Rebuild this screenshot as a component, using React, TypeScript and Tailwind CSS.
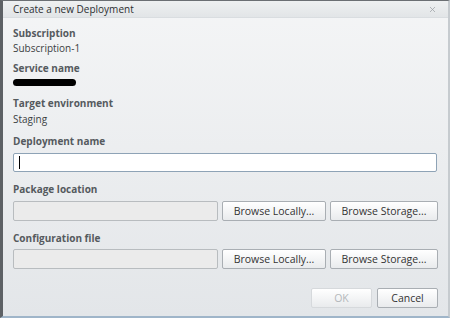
import { X } from 'lucide-react'

function Label({ children }: { children: React.ReactNode }) {
  return <div className="text-[10px] leading-[14px] font-bold text-[#555a5e]">{children}</div>
}

function Btn({ children, disabled, w }: { children: React.ReactNode; disabled?: boolean; w: string }) {
  return (
    <button
      className={
        'flex h-[20px] shrink-0 items-center justify-center rounded-[2px] border bg-gradient-to-b from-[#ffffff] to-[#e9ebed] text-[10.5px] leading-none ' +
        w +
        (disabled ? ' border-[#d6d9dc] text-[#b4b8bb]' : ' border-[#a9aeb3] text-[#333]')
      }
    >
      {children}
    </button>
  )
}

function FileRow() {
  return (
    <div className="flex gap-[4px]">
      <div className="h-[20px] w-[206px] rounded-[2px] border border-[#b8bcbf] bg-[#ebebeb]" />
      <Btn w="w-[104px]">Browse Locally...</Btn>
      <Btn w="w-[108px]">Browse Storage...</Btn>
    </div>
  )
}

export default function App() {
  return (
    <div
      className="h-[318px] w-[450px] overflow-hidden border-t border-l-[3px] border-r-[2px] border-b-[2px] border-t-[#6b6f73] border-l-[#5d6165] border-r-[#c6cbcf] border-b-[#9fb5c9] bg-gradient-to-b from-[#f4f5f6] to-[#e3e6e9] text-[#3c3f42]"
      style={{ fontFamily: '"Open Sans", "DejaVu Sans", sans-serif' }}
    >
      <div className="flex h-[17px] items-center justify-between border-b border-[#d9dde0] bg-gradient-to-b from-[#eef0f1] to-[#e2e5e7] pr-[11px] pl-[10px]">
        <span className="text-[10px] leading-none text-[#2d2f31]">Create a new Deployment</span>
        <X className="size-[9px] text-[#9ea2a5]" strokeWidth={2} />
      </div>

      <div className="flex flex-col px-[10px] pt-[8px]">
        <Label>Subscription</Label>
        <div className="mt-[1px] text-[10px] leading-[14px]">Subscription-1</div>

        <div className="mt-[6px]">
          <Label>Service name</Label>
        </div>
        <div className="mt-[4px] h-[7px] w-[63px] rounded-full bg-black" />

        <div className="mt-[10px]">
          <Label>Target environment</Label>
        </div>
        <div className="mt-[2px] text-[10px] leading-[14px]">Staging</div>

        <div className="mt-[8px]">
          <Label>Deployment name</Label>
        </div>
        <div className="mt-[5px] flex h-[19px] w-[424px] items-center rounded-[2px] border border-[#8ea3b6] bg-white pl-[5px]">
          <div className="h-[13px] w-px bg-black" />
        </div>

        <div className="mt-[10px]">
          <Label>Package location</Label>
        </div>
        <div className="mt-[5px]">
          <FileRow />
        </div>

        <div className="mt-[10px]">
          <Label>Configuration file</Label>
        </div>
        <div className="mt-[4px]">
          <FileRow />
        </div>

        <div className="mt-[19px] flex justify-end gap-[5px]">
          <Btn disabled w="w-[61px]">OK</Btn>
          <Btn w="w-[61px]">Cancel</Btn>
        </div>
      </div>
    </div>
  )
}
